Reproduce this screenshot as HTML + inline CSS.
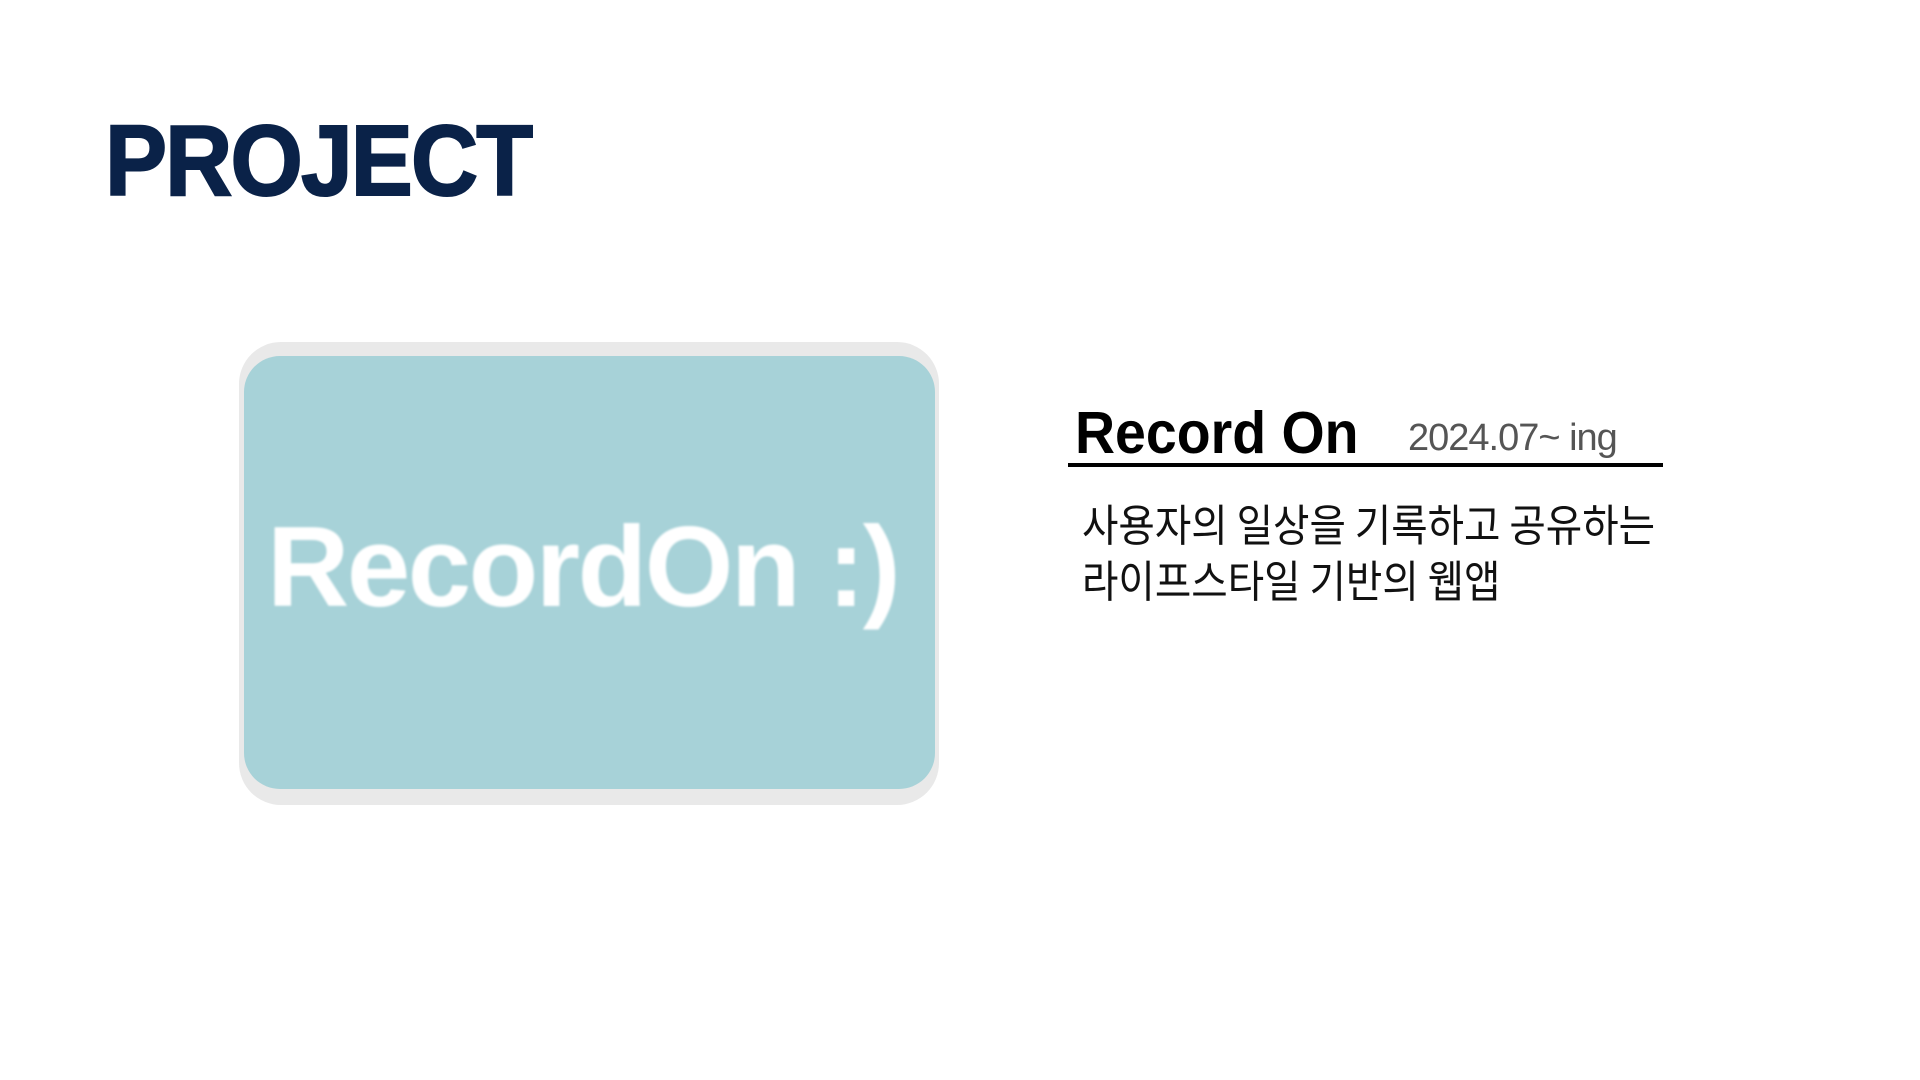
<!DOCTYPE html>
<html><head><meta charset="utf-8"><style>
html,body{margin:0;padding:0;background:#fff;width:1920px;height:1080px;overflow:hidden;position:relative;font-family:"Liberation Sans","Noto Sans CJK KR",sans-serif}
.abs{position:absolute;white-space:nowrap}
#proj{left:105px;top:106px;font-size:100px;font-weight:900;color:#0a2248;transform-origin:0 0;transform:scaleX(0.93);letter-spacing:-2px;line-height:1.1;-webkit-text-stroke:2px #0a2248}
#outer{left:239px;top:342px;width:700px;height:463px;background:#e9e9e9;border-radius:42px}
#inner{left:244px;top:356px;width:691px;height:433px;background:#a7d2d8;border-radius:36px}
#logo{left:267px;top:505px;font-size:114px;font-weight:bold;color:#fff;letter-spacing:-2.5px;line-height:1.1;filter:blur(1px)}
#title{left:1075px;top:401px;font-size:59px;font-weight:bold;color:#000;line-height:1.1;transform-origin:0 0;transform:scaleX(0.94)}
#date{left:1408px;top:418px;font-size:38px;color:#555;line-height:1.1;letter-spacing:-1px}
#line{left:1068px;top:463px;width:595px;height:4px;background:#000}
.kr{left:1082px;font-size:44px;color:#111;font-family:"Noto Sans CJK KR",sans-serif;line-height:1;transform-origin:0 0;transform:scaleX(0.9)}
</style></head><body>
<div class="abs" id="proj">PROJECT</div>
<div class="abs" id="outer"></div>
<div class="abs" id="inner"></div>
<div class="abs" id="logo">RecordOn :)</div>
<div class="abs" id="title">Record On</div>
<div class="abs" id="date">2024.07~ ing</div>
<div class="abs" id="line"></div>
<div class="abs kr" style="top:500px">사용자의 일상을 기록하고 공유하는</div>
<div class="abs kr" style="top:556px">라이프스타일 기반의 웹앱</div>
</body></html>
